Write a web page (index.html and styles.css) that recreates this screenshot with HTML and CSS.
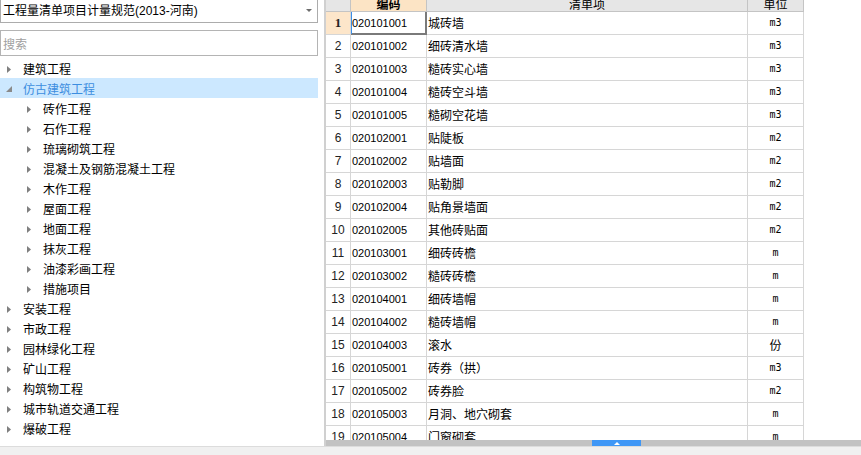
FILE: index.html
```html
<!DOCTYPE html>
<html lang="zh-CN">
<head>
<meta charset="utf-8">
<title>清单</title>
<link rel="stylesheet" href="styles.css">
</head>
<body>
<div class="app">
  <div class="main">
    <aside class="left">
      <div class="combo"><span class="combo-text">工程量清单项目计量规范(2013-河南)</span><span class="combo-arrow"></span></div>
      <input class="search" type="text" placeholder="搜索">
      <ul class="tree">
        <li class="node"><span class="tw"><svg width="4" height="7" viewBox="0 0 4 7"><path d="M0 0L4 3.5L0 7Z" fill="#7f7f7f"/></svg></span><span class="label">建筑工程</span></li>
        <li class="node sel"><span class="tw"><svg width="6" height="6" viewBox="0 0 6 6"><path d="M6 0V6H0Z" fill="#8a8a8a"/></svg></span><span class="label">仿古建筑工程</span></li>
        <li class="node l1"><span class="tw"><svg width="4" height="7" viewBox="0 0 4 7"><path d="M0 0L4 3.5L0 7Z" fill="#7f7f7f"/></svg></span><span class="label">砖作工程</span></li>
        <li class="node l1"><span class="tw"><svg width="4" height="7" viewBox="0 0 4 7"><path d="M0 0L4 3.5L0 7Z" fill="#7f7f7f"/></svg></span><span class="label">石作工程</span></li>
        <li class="node l1"><span class="tw"><svg width="4" height="7" viewBox="0 0 4 7"><path d="M0 0L4 3.5L0 7Z" fill="#7f7f7f"/></svg></span><span class="label">琉璃砌筑工程</span></li>
        <li class="node l1"><span class="tw"><svg width="4" height="7" viewBox="0 0 4 7"><path d="M0 0L4 3.5L0 7Z" fill="#7f7f7f"/></svg></span><span class="label">混凝土及钢筋混凝土工程</span></li>
        <li class="node l1"><span class="tw"><svg width="4" height="7" viewBox="0 0 4 7"><path d="M0 0L4 3.5L0 7Z" fill="#7f7f7f"/></svg></span><span class="label">木作工程</span></li>
        <li class="node l1"><span class="tw"><svg width="4" height="7" viewBox="0 0 4 7"><path d="M0 0L4 3.5L0 7Z" fill="#7f7f7f"/></svg></span><span class="label">屋面工程</span></li>
        <li class="node l1"><span class="tw"><svg width="4" height="7" viewBox="0 0 4 7"><path d="M0 0L4 3.5L0 7Z" fill="#7f7f7f"/></svg></span><span class="label">地面工程</span></li>
        <li class="node l1"><span class="tw"><svg width="4" height="7" viewBox="0 0 4 7"><path d="M0 0L4 3.5L0 7Z" fill="#7f7f7f"/></svg></span><span class="label">抹灰工程</span></li>
        <li class="node l1"><span class="tw"><svg width="4" height="7" viewBox="0 0 4 7"><path d="M0 0L4 3.5L0 7Z" fill="#7f7f7f"/></svg></span><span class="label">油漆彩画工程</span></li>
        <li class="node l1"><span class="tw"><svg width="4" height="7" viewBox="0 0 4 7"><path d="M0 0L4 3.5L0 7Z" fill="#7f7f7f"/></svg></span><span class="label">措施项目</span></li>
        <li class="node"><span class="tw"><svg width="4" height="7" viewBox="0 0 4 7"><path d="M0 0L4 3.5L0 7Z" fill="#7f7f7f"/></svg></span><span class="label">安装工程</span></li>
        <li class="node"><span class="tw"><svg width="4" height="7" viewBox="0 0 4 7"><path d="M0 0L4 3.5L0 7Z" fill="#7f7f7f"/></svg></span><span class="label">市政工程</span></li>
        <li class="node"><span class="tw"><svg width="4" height="7" viewBox="0 0 4 7"><path d="M0 0L4 3.5L0 7Z" fill="#7f7f7f"/></svg></span><span class="label">园林绿化工程</span></li>
        <li class="node"><span class="tw"><svg width="4" height="7" viewBox="0 0 4 7"><path d="M0 0L4 3.5L0 7Z" fill="#7f7f7f"/></svg></span><span class="label">矿山工程</span></li>
        <li class="node"><span class="tw"><svg width="4" height="7" viewBox="0 0 4 7"><path d="M0 0L4 3.5L0 7Z" fill="#7f7f7f"/></svg></span><span class="label">构筑物工程</span></li>
        <li class="node"><span class="tw"><svg width="4" height="7" viewBox="0 0 4 7"><path d="M0 0L4 3.5L0 7Z" fill="#7f7f7f"/></svg></span><span class="label">城市轨道交通工程</span></li>
        <li class="node"><span class="tw"><svg width="4" height="7" viewBox="0 0 4 7"><path d="M0 0L4 3.5L0 7Z" fill="#7f7f7f"/></svg></span><span class="label">爆破工程</span></li>
      </ul>
    </aside>
    <section class="right">
      <div class="grid-wrap">
        <div class="grid">
          <div class="hd"><span></span></div>
          <div class="hd cur"><span>编码</span></div>
          <div class="hd"><span>清单项</span></div>
          <div class="hd"><span>单位</span></div>

          <div class="rn cur">1</div><div class="cd focus">020101001</div><div class="nm">城砖墙</div><div class="un">m3</div>
          <div class="rn">2</div><div class="cd">020101002</div><div class="nm">细砖清水墙</div><div class="un">m3</div>
          <div class="rn">3</div><div class="cd">020101003</div><div class="nm">糙砖实心墙</div><div class="un">m3</div>
          <div class="rn">4</div><div class="cd">020101004</div><div class="nm">糙砖空斗墙</div><div class="un">m3</div>
          <div class="rn">5</div><div class="cd">020101005</div><div class="nm">糙砌空花墙</div><div class="un">m3</div>
          <div class="rn">6</div><div class="cd">020102001</div><div class="nm">贴陡板</div><div class="un">m2</div>
          <div class="rn">7</div><div class="cd">020102002</div><div class="nm">贴墙面</div><div class="un">m2</div>
          <div class="rn">8</div><div class="cd">020102003</div><div class="nm">贴勒脚</div><div class="un">m2</div>
          <div class="rn">9</div><div class="cd">020102004</div><div class="nm">贴角景墙面</div><div class="un">m2</div>
          <div class="rn">10</div><div class="cd">020102005</div><div class="nm">其他砖贴面</div><div class="un">m2</div>
          <div class="rn">11</div><div class="cd">020103001</div><div class="nm">细砖砖檐</div><div class="un">m</div>
          <div class="rn">12</div><div class="cd">020103002</div><div class="nm">糙砖砖檐</div><div class="un">m</div>
          <div class="rn">13</div><div class="cd">020104001</div><div class="nm">细砖墙帽</div><div class="un">m</div>
          <div class="rn">14</div><div class="cd">020104002</div><div class="nm">糙砖墙帽</div><div class="un">m</div>
          <div class="rn">15</div><div class="cd">020104003</div><div class="nm">滚水</div><div class="un cjk">份</div>
          <div class="rn">16</div><div class="cd">020105001</div><div class="nm">砖券（拱）</div><div class="un">m3</div>
          <div class="rn">17</div><div class="cd">020105002</div><div class="nm">砖券脸</div><div class="un">m2</div>
          <div class="rn">18</div><div class="cd">020105003</div><div class="nm">月洞、地穴砌套</div><div class="un">m</div>
          <div class="rn">19</div><div class="cd">020105004</div><div class="nm">门窗砌套</div><div class="un">m</div>
        </div>
      </div>
      <div class="hscroll"><div class="thumb"><span class="thumb-arrow"></span></div></div>
    </section>
  </div>
  <div class="status"></div>
</div>
</body>
</html>
```
FILE: styles.css
```css
* { box-sizing: border-box; }

body {
  margin: 0;
  width: 861px;
  height: 455px;
  overflow: hidden;
  background: #f0f0f0;
  font-family: "Noto Sans CJK SC", sans-serif;
  font-size: 12px;
  color: #000;
}

.app {
  display: flex;
  flex-direction: column;
  height: 455px;
}

.main {
  display: flex;
  height: 446px;
  background: #fff;
}

.status {
  height: 9px;
  border-top: 1px solid #dcdcdc;
  background: #f0f0f0;
}

/* left panel */
.left {
  width: 324px;
  display: flex;
  flex-direction: column;
  background: #fff;
}

.combo {
  width: 318px;
  height: 23px;
  border: 1px solid #acacac;
  border-top: none;
  display: flex;
  align-items: center;
  justify-content: space-between;
  padding: 0 5px 0 2px;
  font-family: "Liberation Sans", "Noto Sans CJK SC", sans-serif;
  font-size: 12px;
  line-height: 22px;
}

.combo-arrow {
  width: 0;
  height: 0;
  border-left: 3px solid transparent;
  border-right: 3px solid transparent;
  border-top: 3px solid #6d6d6d;
  margin-top: -1px;
}

.search {
  display: block;
  margin: 7px 0 0;
  width: 318px;
  height: 26px;
  border: 1px solid #b4b4b4;
  padding: 0 2px;
  font-family: "Noto Sans CJK SC", sans-serif;
  font-size: 12px;
  outline: none;
  background: #fff;
}

.search::placeholder { color: #a0a0a0; }

.tree {
  list-style: none;
  margin: 2px 0 0;
  padding: 0;
  width: 318px;
}

.node {
  height: 20px;
  display: flex;
  align-items: center;
  padding-left: 1px;
  white-space: nowrap;
  line-height: 20px;
}

.node.l1 { padding-left: 21px; }

.node.sel {
  background: #cce8ff;
  color: #3d8ee0;
}

.label { padding-top: 1px; }

.tw {
  width: 16px;
  height: 20px;
  display: flex;
  justify-content: center;
  align-items: center;
  margin-right: 6px;
  padding-top: 2px;
}

.tw svg { display: block; }

/* right panel */
.right {
  flex: 1;
  min-width: 0;
  display: flex;
  flex-direction: column;
  border-left: 2px solid #d0d0d0;
  background: #fff;
}

.grid-wrap {
  height: 440px;
  overflow: hidden;
}

.grid {
  display: grid;
  grid-template-columns: 25px 76px 321px 56px;
  grid-template-rows: 12px;
  grid-auto-rows: 23px;
  width: max-content;
}

.grid > div {
  border-right: 1px solid #d6d6d6;
  border-bottom: 1px solid #d6d6d6;
  overflow: hidden;
  white-space: nowrap;
}

.grid > .hd {
  background: #e6e6e6;
  border-color: #c4c4c4;
  text-align: center;
}

.hd span {
  display: block;
  margin-top: -4px;
  line-height: 16px;
}

.grid > .hd.cur {
  background: #fce4c5;
  font-weight: bold;
}

.rn {
  text-align: center;
  line-height: 22px;
  font-family: "Liberation Sans", sans-serif;
  font-size: 12px;
  color: #222;
}

.grid > .rn.cur {
  background: #fde6ca;
  font-weight: bold;
  font-family: "Liberation Serif", serif;
  font-size: 13px;
}

.cd {
  font-family: "Liberation Sans", sans-serif;
  font-size: 11px;
  line-height: 22px;
  padding-left: 1px;
}

.grid > .cd.focus {
  box-shadow: inset 1px 0 0 #3c8fe8, inset -1px -1px 0 #7a7a7a;
  border-right-color: #7a7a7a;
  border-bottom-color: #7a7a7a;
  padding-left: 1px;
}

.nm {
  line-height: 22px;
  padding-left: 1px;
  font-size: 12px;
}

.un {
  text-align: center;
  font-family: "DejaVu Sans Mono", monospace;
  font-size: 10px;
  line-height: 22px;
}

.un.cjk {
  font-family: "Noto Sans CJK SC", sans-serif;
  font-size: 12px;
}

.hscroll {
  height: 6px;
  background: #c2c2c2;
  display: flex;
}

.thumb {
  width: 49px;
  margin-left: 266px;
  background: #3f97f6;
  display: flex;
  justify-content: center;
  align-items: center;
}

.thumb-arrow {
  width: 0;
  height: 0;
  border-left: 3px solid transparent;
  border-right: 3px solid transparent;
  border-bottom: 3px solid #fff;
}
```
